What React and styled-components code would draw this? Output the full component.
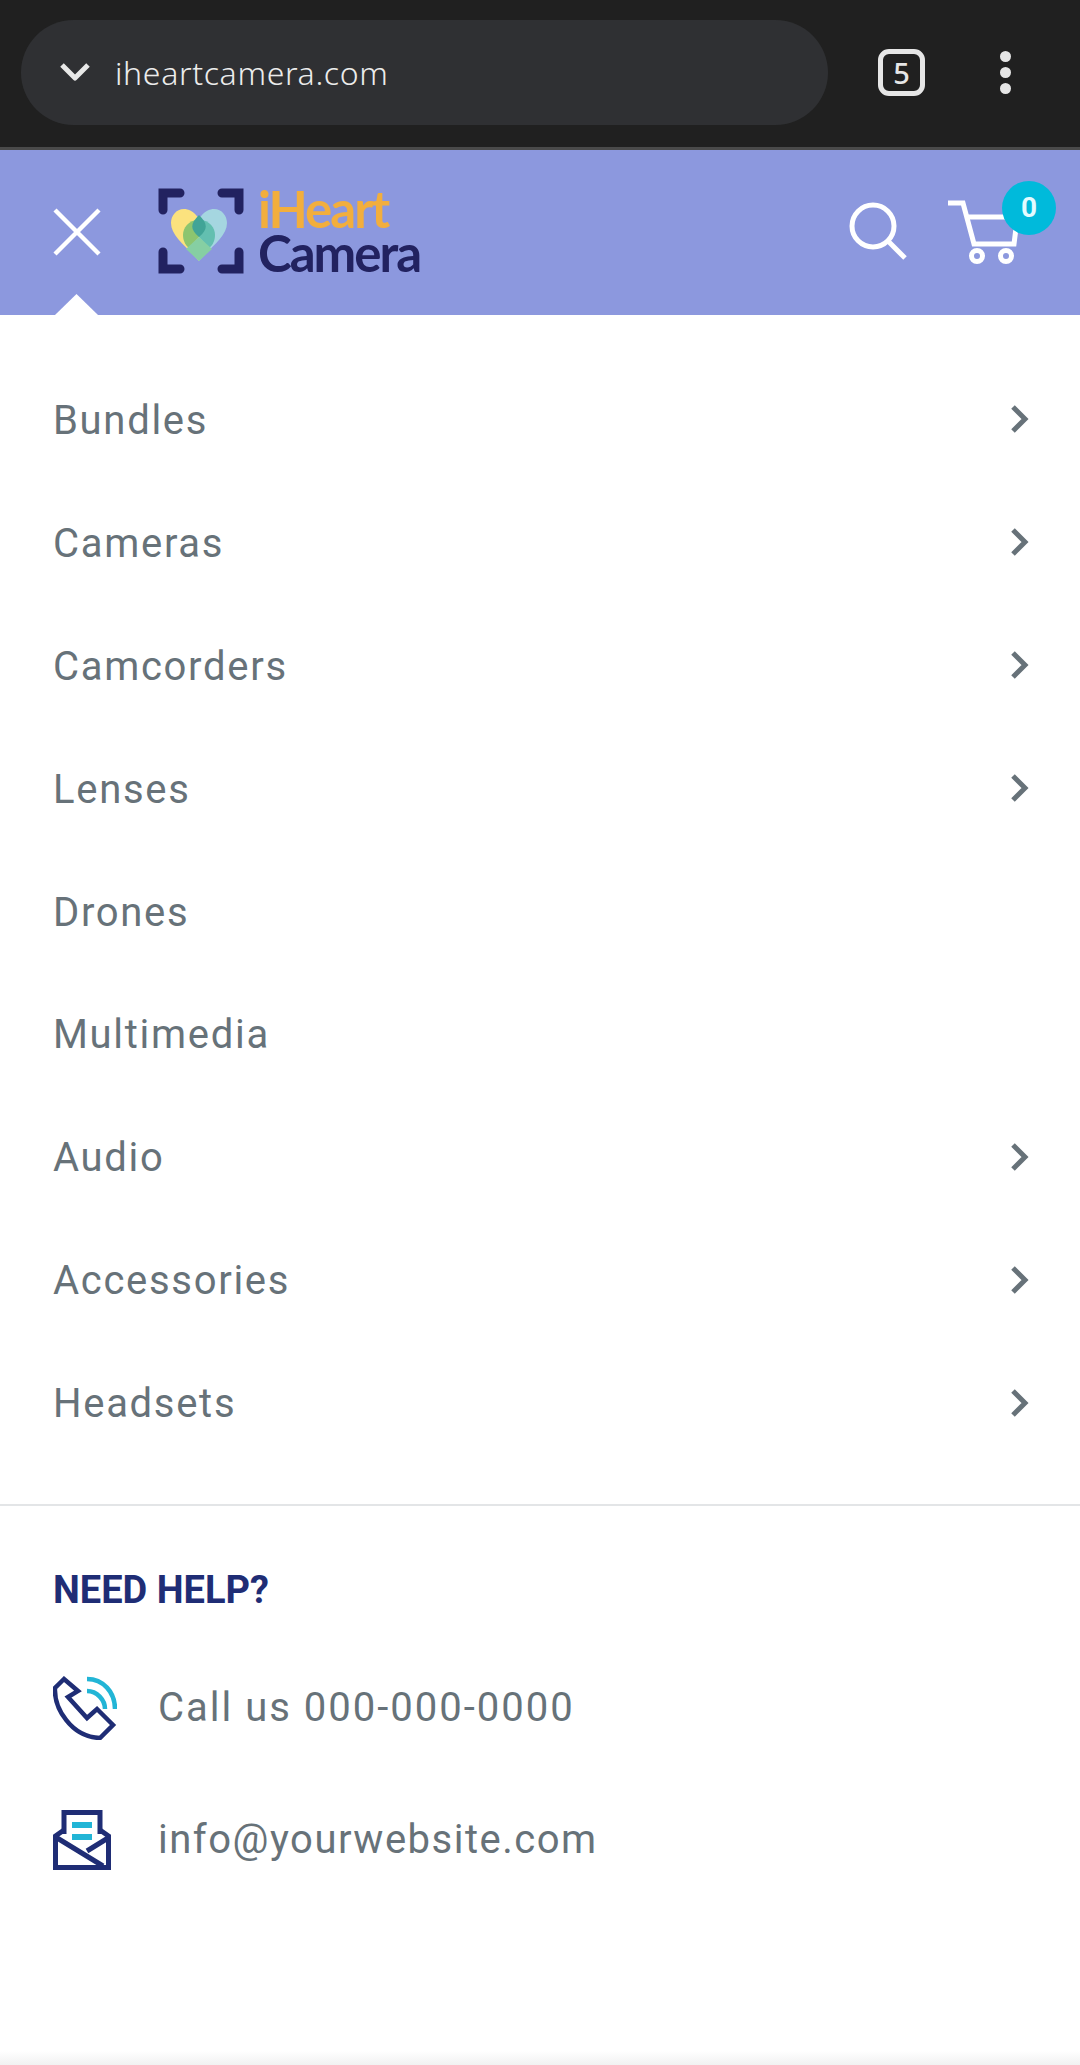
import styled, { createGlobalStyle } from "styled-components";
import { useState } from "react";

const menuItems = [
  { label: "Bundles", more: true },
  { label: "Cameras", more: true },
  { label: "Camcorders", more: true },
  { label: "Lenses", more: true },
  { label: "Drones", more: false },
  { label: "Multimedia", more: false },
  { label: "Audio", more: true },
  { label: "Accessories", more: true },
  { label: "Headsets", more: true },
];

export default function App() {
  const [tabs] = useState(5);
  const [cartCount] = useState(0);

  return (
    <>
      <GlobalStyle />
      <Page>
        <BrowserBar>
          <UrlPill>
            <svg width="30" height="20" viewBox="0 0 30 20" fill="none">
              <polyline points="2,3 15,16 28,3" stroke="#e8e8e8" strokeWidth="5" strokeLinejoin="round" />
            </svg>
            <UrlText>iheartcamera.com</UrlText>
          </UrlPill>
          <TabCount>{tabs}</TabCount>
          <Dots>
            <span />
            <span />
            <span />
          </Dots>
        </BrowserBar>

        <Header>
          <CloseButton>
            <svg width="48" height="48" viewBox="0 0 48 48" fill="none">
              <path d="M2 2L46 46M46 2L2 46" stroke="#fff" strokeWidth="4.4" />
            </svg>
          </CloseButton>
          <Logo>
            <svg width="86" height="86" viewBox="0 0 86 86" fill="none">
              <g stroke="#222260" strokeWidth="9" strokeLinecap="round">
                <path d="M22 5H5V22" />
                <path d="M64 5H81V22" />
                <path d="M5 64V81H22" />
                <path d="M81 64V81H64" />
              </g>
              <path d="M41 31C36 23 30 21 26 21C18 21 13 28 13 35C13 48 28 58 41 73Z" fill="#fbe27e" />
              <path d="M41 31C46 23 52 21 56 21C64 21 69 28 69 35C69 48 54 58 41 73Z" fill="#a5d6e0" />
              <path d="M41 32C30 32 25 40 25 47C25 52 27 57 31 60L41 49Z" fill="#8cc56f" />
              <path d="M41 32C52 32 57 40 57 47C57 52 55 57 51 60L41 49Z" fill="#63bfb0" />
              <path d="M41 49L54 61L41 73L28 61Z" fill="#86cfa3" />
              <path d="M41 27C32 36 32 41 41 49C50 41 50 36 41 27Z" fill="#41a497" />
            </svg>
            <LogoWords>
              <LogoWord $tone="#f2ae3d">iHeart</LogoWord>
              <LogoWord $tone="#222260">Camera</LogoWord>
            </LogoWords>
          </Logo>
          <HeaderActions>
            <SearchIcon width="58" height="58" viewBox="0 0 58 58" fill="none">
              <circle cx="24" cy="24" r="21" stroke="#fff" strokeWidth="5" />
              <path d="M39 39L56 56" stroke="#fff" strokeWidth="5" />
            </SearchIcon>
            <CartWrap>
              <svg width="70" height="66" viewBox="0 0 70 66" fill="none">
                <path d="M0 3H15L26 44H66L69 20" stroke="#fff" strokeWidth="5" />
                <path d="M19 17H62" stroke="#fff" strokeWidth="5" />
                <circle cx="29" cy="56" r="5.5" stroke="#fff" strokeWidth="5" />
                <circle cx="58" cy="56" r="5.5" stroke="#fff" strokeWidth="5" />
              </svg>
              <CartBadge>{cartCount}</CartBadge>
            </CartWrap>
          </HeaderActions>
          <Caret />
        </Header>

        <Menu>
          {menuItems.map((item) => (
            <MenuRow key={item.label}>
              <MenuLabel>{item.label}</MenuLabel>
              {item.more && (
                <svg width="20" height="30" viewBox="0 0 20 30" fill="none">
                  <polyline points="3,3 15,15 3,27" stroke="#677279" strokeWidth="5" />
                </svg>
              )}
            </MenuRow>
          ))}
        </Menu>

        <Help>
          <HelpTitle>NEED HELP?</HelpTitle>
          <ContactRow>
            <ContactIcon>
              <svg width="64" height="64" viewBox="0 0 64 64" fill="none">
                <path
                  d="M11 3L2 12C1 32 18 61 47 62L60 49L44 33L34 42L15 21L25 15Z"
                  stroke="#1f2d75"
                  strokeWidth="4.500"
                />
                <path d="M34 3C50 3 62 16 62 33" stroke="#22b5d6" strokeWidth="4.500" />
                <path d="M34 15C44 15 52 24 52 33" stroke="#22b5d6" strokeWidth="4.500" />
              </svg>
            </ContactIcon>
            <ContactText $tracking={2}>Call us 000-000-0000</ContactText>
          </ContactRow>
          <ContactRow>
            <ContactIcon>
              <svg width="58" height="60" viewBox="0 0 58 60" fill="none">
                <path d="M11 24V2.500H47V24" stroke="#1f2d75" strokeWidth="5" />
                <path d="M11 20L2.500 26V57.500H55.500V26L47 20" stroke="#1f2d75" strokeWidth="5" />
                <path d="M2.500 27L50 56M55 28L34 41" stroke="#1f2d75" strokeWidth="5" />
                <path d="M19 15H39M19 27H39" stroke="#22b5d6" strokeWidth="6" />
              </svg>
            </ContactIcon>
            <ContactText $tracking={1.5}>info@yourwebsite.com</ContactText>
          </ContactRow>
        </Help>
        <BottomShade />
      </Page>
    </>
  );
}

const GlobalStyle = createGlobalStyle`
  html, body {
    margin: 0;
    padding: 0;
    background: #fff;
  }
  * {
    box-sizing: border-box;
  }
`;

const Page = styled.div`
  position: relative;
  width: 1080px;
  height: 2065px;
  overflow: hidden;
  background: #fff;
  font-family: "Roboto", "Liberation Sans", sans-serif;
`;

const BrowserBar = styled.div`
  height: 150px;
  padding: 21px 0 24px 21px;
  display: flex;
  align-items: center;
  background: #202020;
  border-bottom: 3px solid #4a4a4a;
`;

const UrlPill = styled.div`
  width: 807px;
  height: 105px;
  padding-left: 39px;
  display: flex;
  align-items: center;
  gap: 25px;
  background: #2f3033;
  border-radius: 53px;
`;

const UrlText = styled.span`
  font-family: "Noto Sans", sans-serif;
  font-size: 32px;
  font-weight: 300;
  letter-spacing: 0.65px;
  color: #ececec;
`;

const TabCount = styled.div`
  width: 47px;
  height: 47px;
  margin-left: 50px;
  display: flex;
  align-items: center;
  justify-content: center;
  border: 5px solid #e6e6e6;
  border-radius: 11px;
  font-family: "Noto Sans", sans-serif;
  font-size: 29px;
  font-weight: 500;
  color: #e6e6e6;
`;

const Dots = styled.div`
  margin-left: 75px;
  display: flex;
  flex-direction: column;
  gap: 5px;

  span {
    width: 11px;
    height: 11px;
    border-radius: 50%;
    background: #e6e6e6;
  }
`;

const Header = styled.header`
  position: relative;
  height: 165px;
  padding-left: 53px;
  display: flex;
  align-items: center;
  background: #8c98de;
`;

const CloseButton = styled.div`
  height: 48px;
  margin-top: -2px;
`;

const Logo = styled.div`
  margin: -3px 0 0 57px;
  display: flex;
  align-items: center;
  gap: 8px;
`;

const LogoWords = styled.div`
  margin-left: 6px;
  display: flex;
  flex-direction: column;
`;

const LogoWord = styled.span`
  font-family: "Lato", sans-serif;
  font-size: 51px;
  font-weight: 700;
  line-height: 44px;
  letter-spacing: -2px;
  color: ${(props) => props.$tone};
`;

const HeaderActions = styled.div`
  margin-left: auto;
  padding-right: 62px;
  display: flex;
  align-items: center;
  gap: 41px;
`;

const SearchIcon = styled.svg`
  margin-top: -4px;
`;

const CartWrap = styled.div`
  position: relative;
  height: 66px;
`;

const CartBadge = styled.span`
  position: absolute;
  top: -19px;
  left: 54px;
  width: 54px;
  height: 54px;
  display: flex;
  align-items: center;
  justify-content: center;
  border-radius: 50%;
  background: #00badb;
  font-size: 28px;
  font-weight: 700;
  color: #e3fbff;
`;

const Caret = styled.div`
  position: absolute;
  left: 55px;
  bottom: 0;
  width: 43px;
  height: 21px;
  background: #fff;
  clip-path: polygon(50% 0, 100% 100%, 0 100%);
`;

const Menu = styled.nav`
  padding: 43px 0 40px;
  border-bottom: 2px solid #e3e5e7;
`;

const MenuRow = styled.div`
  height: 122.9px;
  padding: 0 50px 0 53px;
  display: flex;
  align-items: center;
  justify-content: space-between;
`;

const MenuLabel = styled.span`
  padding-top: 2px;
  font-size: 40px;
  letter-spacing: 1.7px;
  color: #677279;
`;

const Help = styled.section`
  padding: 62px 53px 0;
`;

const HelpTitle = styled.h3`
  margin: 0 0 29px;
  font-size: 38px;
  font-weight: 700;
  line-height: 44px;
  color: #1f2d75;
`;

const ContactRow = styled.div`
  height: 132px;
  display: flex;
  align-items: center;
`;

const ContactIcon = styled.div`
  width: 105px;
  padding-top: 2px;
  display: flex;
  align-items: center;
`;

const ContactText = styled.span`
  font-size: 40px;
  letter-spacing: ${(props) => props.$tracking}px;
  color: #677279;
`;

const BottomShade = styled.div`
  position: absolute;
  left: 0;
  right: 0;
  bottom: 0;
  height: 14px;
  background: linear-gradient(#fff, #f1f1f1);
`;
